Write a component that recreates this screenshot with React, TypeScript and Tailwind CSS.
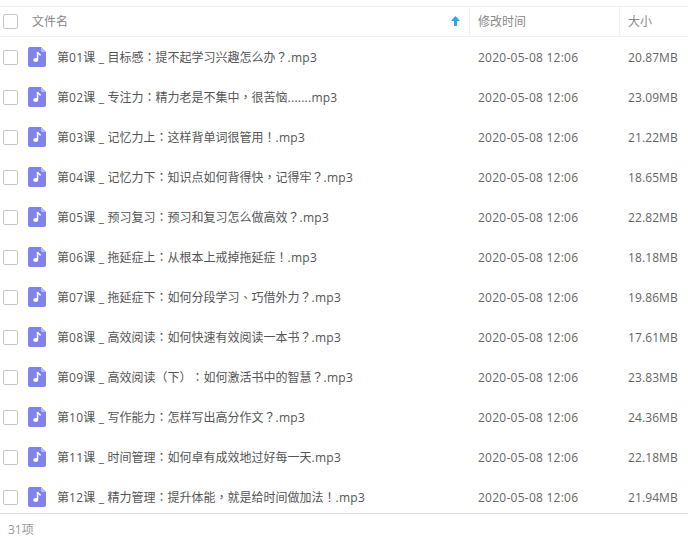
const files = [
  { name: "第01课 _ 目标感：提不起学习兴趣怎么办？.mp3", size: "20.87MB" },
  { name: "第02课 _ 专注力：精力老是不集中，很苦恼.......mp3", size: "23.09MB" },
  { name: "第03课 _ 记忆力上：这样背单词很管用！.mp3", size: "21.22MB" },
  { name: "第04课 _ 记忆力下：知识点如何背得快，记得牢？.mp3", size: "18.65MB" },
  { name: "第05课 _ 预习复习：预习和复习怎么做高效？.mp3", size: "22.82MB" },
  { name: "第06课 _ 拖延症上：从根本上戒掉拖延症！.mp3", size: "18.18MB" },
  { name: "第07课 _ 拖延症下：如何分段学习、巧借外力？.mp3", size: "19.86MB" },
  { name: "第08课 _ 高效阅读：如何快速有效阅读一本书？.mp3", size: "17.61MB" },
  { name: "第09课 _ 高效阅读（下）：如何激活书中的智慧？.mp3", size: "23.83MB" },
  { name: "第10课 _ 写作能力：怎样写出高分作文？.mp3", size: "24.36MB" },
  { name: "第11课 _ 时间管理：如何卓有成效地过好每一天.mp3", size: "22.18MB" },
  { name: "第12课 _ 精力管理：提升体能，就是给时间做加法！.mp3", size: "21.94MB" },
];

function Checkbox() {
  return <div className="w-[13px] h-[13px] box-content border border-[#c4c4c4] rounded-[2px] bg-white" />;
}

function MusicIcon() {
  return (
    <svg width="18" height="20" viewBox="0 0 18 20" className="shrink-0">
      <path d="M2 0H13L18 5V18a2 2 0 0 1-2 2H2a2 2 0 0 1-2-2V2a2 2 0 0 1 2-2Z" fill="#7f83ea" />
      <path d="M13 0L18 5H14.500a1.500 1.500 0 0 1-1.500-1.500Z" fill="#b9bbf3" />
      <path d="M9.500 5V12.500" stroke="#fff" strokeWidth="1.500" fill="none" />
      <path d="M9.500 5C10 7 12 7 12.500 8.500" stroke="#fff" strokeWidth="1.500" fill="none" />
      <ellipse cx="7.700" cy="13" rx="2.500" ry="2.100" fill="#fff" />
    </svg>
  );
}

// the reference centres full-width punctuation, which the TC face does too
function FileName({ text }: { text: string }) {
  const parts = text.split(/([：？！，、（）]+|[0-9 _.a-z]+)/).filter(Boolean);
  return (
    <span className="ml-[11px] text-[#555] whitespace-nowrap [text-spacing-trim:space-all]">
      {parts.map((p, i) =>
        /^[：？！，、（）]/.test(p) ? (
          <span key={i} className="font-['Noto_Sans_CJK_TC']">{p}</span>
        ) : /^[0-9 _.a-z]/.test(p) ? (
          <span key={i} className="tracking-[0.25px]">{p}</span>
        ) : (
          <span key={i}>{p}</span>
        ),
      )}
    </span>
  );
}

export default function App() {
  return (
    <div
      className="w-[688px] h-[542px] bg-white text-[12px] text-[#666] overflow-hidden pt-[6px]"
      style={{ fontFamily: '"Open Sans", "Noto Sans CJK SC", sans-serif' }}
    >
      {/* Header */}
      <div className="flex h-[31px] border-y border-[#f0f0f0] text-[#888]">
        <div className="w-[469px] flex items-center pl-[3px] pr-[9px]">
          <Checkbox />
          <span className="ml-[14px] flex-1">文件名</span>
          <svg width="9" height="10" viewBox="0 0 9 10" className="mt-[-1px]">
            <path d="M4.500 0L9 5H6V10H3V5H0Z" fill="#2aa3ea" />
          </svg>
        </div>
        <div className="w-[150px] flex items-center pl-[8px] border-l border-[#f0f0f0]">修改时间</div>
        <div className="flex-1 flex items-center pl-[8px] border-l border-[#f0f0f0]">大小</div>
      </div>

      {/* Rows */}
      <div className="h-[477px] border-b border-[#dcdcdc]">
        {files.map((f) => (
          <div key={f.name} className="flex items-center h-[40px]">
            <div className="w-[469px] flex items-center pl-[3px] min-w-0">
              <Checkbox />
              <div className="ml-[10px]"><MusicIcon /></div>
              <FileName text={f.name} />
            </div>
            <div className="w-[150px] pl-[9px] pt-[2px] tracking-[0.25px]">2020-05-08 12:06</div>
            <div className="flex-1 pl-[9px] pt-[2px] tracking-[0.1px]">{f.size}</div>
          </div>
        ))}
      </div>

      {/* Footer */}
      <div className="pl-[8px] pt-[7px] text-[#999]">31项</div>
    </div>
  );
}
